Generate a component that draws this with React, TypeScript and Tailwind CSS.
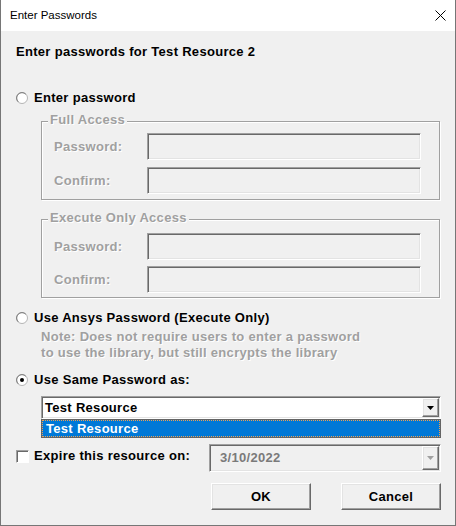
import React from "react";

const sunken =
  "border border-t-[#a0a0a0] border-l-[#a0a0a0] border-r-white border-b-white shadow-[inset_1px_1px_0_#696969,inset_-1px_-1px_0_#e3e3e3]";
const raised =
  "border border-t-white border-l-white border-r-[#696969] border-b-[#696969] shadow-[inset_-1px_-1px_0_#a0a0a0,inset_1px_1px_0_#e3e3e3]";
const disabledText = "text-[#a0a0a0] [text-shadow:1px_1px_0_#fff]";

function Radio({ checked }: { checked?: boolean }) {
  return (
    <svg width="12" height="12" viewBox="0 0 12 12" className="shrink-0">
      <circle cx="6" cy="6" r="5.5" fill="#fff" stroke="#b4b4b4" />
      <path d="M2.2 9.8 A5.3 5.3 0 0 1 9.8 2.2" fill="none" stroke="#7a7a7a" />
      {checked ? <circle cx="6" cy="6" r="2" fill="#000" /> : null}
    </svg>
  );
}

function Arrow({ color }: { color: string }) {
  return (
    <svg width="7" height="4" viewBox="0 0 7 4">
      <path d="M0 0 H7 L3.5 4 Z" fill={color} />
    </svg>
  );
}

function Field({ label }: { label: string }) {
  return (
    <div className="flex h-[27px] items-center">
      <div className={`w-[105px] pl-[12px] ${disabledText}`}>{label}</div>
      <div className={`h-[27px] w-[274px] bg-[#f0f0f0] ${sunken}`} />
    </div>
  );
}

function GroupBox({
  title,
  top,
  gap,
  bottom,
}: {
  title: string;
  top: string;
  gap: string;
  bottom: string;
}) {
  return (
    <div
      className={`relative ml-[25px] flex w-[399px] flex-col border border-[#a0a0a0] shadow-[1px_1px_0_#fff,inset_1px_1px_0_#fff] ${top} ${gap} ${bottom}`}
    >
      <span className={`absolute left-[6px] top-[-10px] bg-[#f0f0f0] px-[2px] leading-4 ${disabledText}`}>
        {title}
      </span>
      <Field label="Password:" />
      <Field label="Confirm:" />
    </div>
  );
}

export default function App() {
  return (
    <div className="flex h-[526px] w-[456px] flex-col border-x border-b border-[#767676] bg-[#f0f0f0] font-['Liberation_Sans',Arial,sans-serif]">
      <div className="flex h-[31px] shrink-0 items-center justify-between bg-white pl-[9px] pr-[9px]">
        <span className="text-[11.5px] text-black">Enter Passwords</span>
        <svg width="11" height="11" viewBox="0 0 11 11">
          <path d="M0.5 0.5 L10.5 10.5 M10.5 0.5 L0.5 10.5" stroke="#000" strokeWidth="1" />
        </svg>
      </div>

      <div className="flex w-[440px] flex-col pl-[15px] text-[13px] font-bold leading-4 tracking-[0.3px] text-black">
        <div className="mt-[13px]">Enter passwords for Test Resource 2</div>

        <div className="mt-[30px] flex items-center gap-[6px]">
          <Radio />
          <span>Enter password</span>
        </div>

        <div className="mt-[15px]">
          <GroupBox title="Full Access" top="pt-[11px]" gap="gap-[7px]" bottom="pb-[5px]" />
        </div>
        <div className="mt-[19px]">
          <GroupBox title="Execute Only Access" top="pt-[13px]" gap="gap-[6px]" bottom="pb-[4px]" />
        </div>

        <div className="mt-[12px] flex items-center gap-[6px]">
          <Radio />
          <span>Use Ansys Password (Execute Only)</span>
        </div>
        <div className={`ml-[25px] mt-[3px] ${disabledText}`}>
          <div>Note: Does not require users to enter a password</div>
          <div>to use the library, but still encrypts the library</div>
        </div>

        <div className="mt-[11px] flex items-center gap-[6px]">
          <Radio checked />
          <span>Use Same Password as:</span>
        </div>

        <div className={`ml-[25px] mt-[8px] flex h-[23px] w-[400px] items-center bg-white pl-[3px] pr-[1px] ${sunken}`}>
          <span className="flex-1">Test Resource</span>
          <div className={`flex h-[19px] w-[17px] items-center justify-center bg-[#f0f0f0] ${raised}`}>
            <Arrow color="#000" />
          </div>
        </div>
        <div className="ml-[25px] h-[19px] w-[400px] border border-[#646464] bg-[#0078d7]">
          <div className="flex h-full items-center border border-dotted border-[#f0a050] pl-[3px] text-white">
            Test Resource
          </div>
        </div>

        <div className="mt-[6px] flex h-[28px] w-[425px] items-start">
          <div className="mt-[6px] h-[13px] w-[13px] border border-t-[#a0a0a0] border-l-[#a0a0a0] border-r-white border-b-white bg-white shadow-[inset_1px_1px_0_#696969]" />
          <span className="ml-[5px] mt-[4px]">Expire this resource on:</span>
          <div className={`ml-auto flex h-[28px] w-[232px] items-center bg-[#f0f0f0] pl-[10px] pr-[1px] ${sunken}`}>
            <span className="flex-1 text-[#7a7a7a]">3/10/2022</span>
            <div className={`flex h-[24px] w-[17px] items-center justify-center bg-[#f0f0f0] ${raised}`}>
              <Arrow color="#a0a0a0" />
            </div>
          </div>
        </div>

        <div className="mt-[11px] flex w-[425px] justify-end gap-[30px]">
          <button type="button" className={`h-[27px] w-[100px] bg-[#f0f0f0] text-[13px] font-bold tracking-[0.3px] ${raised}`}>
            OK
          </button>
          <button type="button" className={`h-[27px] w-[100px] bg-[#f0f0f0] text-[13px] font-bold tracking-[0.3px] ${raised}`}>
            Cancel
          </button>
        </div>
      </div>
    </div>
  );
}
